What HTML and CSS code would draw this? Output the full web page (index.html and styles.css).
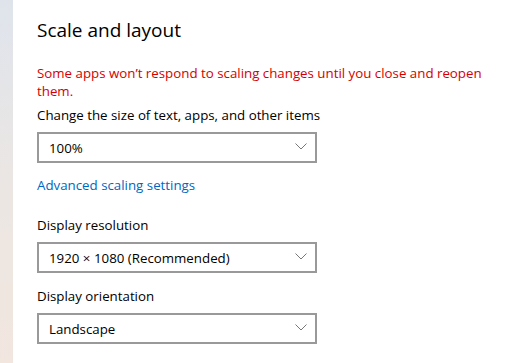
FILE: index.html
```html
<!DOCTYPE html>
<html lang="en">
<head>
    <meta charset="UTF-8">
    <title>Scale and layout</title>
    <link rel="stylesheet" href="styles.css">
</head>
<body>
    <div class="sidebar-edge"></div>

    <main class="panel">
        <h1>Scale and layout</h1>
        <p class="warning">Some apps won’t respond to scaling changes until you close and reopen them.</p>

        <label class="field-label">Change the size of text, apps, and other items</label>
        <div class="dropdown">
            <span>100%</span>
            <svg class="chevron" width="12" height="7" viewBox="0 0 12 7"><path d="M0.5 0.5 L6 6 L11.5 0.5" fill="none" stroke="#777" stroke-width="1"/></svg>
        </div>

        <a href="#" class="link">Advanced scaling settings</a>

        <label class="field-label spaced">Display resolution</label>
        <div class="dropdown">
            <span>1920 × 1080 (Recommended)</span>
            <svg class="chevron" width="12" height="7" viewBox="0 0 12 7"><path d="M0.5 0.5 L6 6 L11.5 0.5" fill="none" stroke="#777" stroke-width="1"/></svg>
        </div>

        <label class="field-label after-box">Display orientation</label>
        <div class="dropdown">
            <span>Landscape</span>
            <svg class="chevron" width="12" height="7" viewBox="0 0 12 7"><path d="M0.5 0.5 L6 6 L11.5 0.5" fill="none" stroke="#777" stroke-width="1"/></svg>
        </div>
    </main>
</body>
</html>
```

FILE: styles.css
```css
html, body {
    height: 100%;
}
body {
    margin: 0;
    display: flex;
    background: #fff;
    font-family: "Open Sans", "Noto Sans", sans-serif;
    color: #000;
    overflow: hidden;
}
.sidebar-edge {
    width: 13px;
    flex-shrink: 0;
    background: linear-gradient(to bottom, #dfe4ec 0%, #ebe6e3 50%, #f2e6df 100%);
}
.panel {
    padding: 16px 0 0 24px;
    display: flex;
    flex-direction: column;
    align-items: flex-start;
}
h1 {
    margin: 0;
    font-size: 19px;
    font-weight: 400;
    line-height: 28px;
}
.warning {
    margin: 20px 0 0;
    width: 470px;
    color: #d40000;
    font-size: 13.3px;
    line-height: 18px;
}
.field-label {
    margin-top: 5px;
    font-size: 13.3px;
    line-height: 20px;
}
.field-label.spaced {
    margin-top: 20px;
}
.field-label.after-box {
    margin-top: 13px;
}
.dropdown {
    margin-top: 7px;
    width: 258px;
    height: 27px;
    border: 2px solid #999;
    padding: 0 8px 0 10px;
    display: flex;
    align-items: center;
    justify-content: space-between;
    font-size: 13.3px;
}
.chevron {
    margin-top: -2px;
}
.link {
    margin-top: 12px;
    color: #0067c0;
    text-decoration: none;
    font-size: 13.3px;
    line-height: 20px;
}
```
